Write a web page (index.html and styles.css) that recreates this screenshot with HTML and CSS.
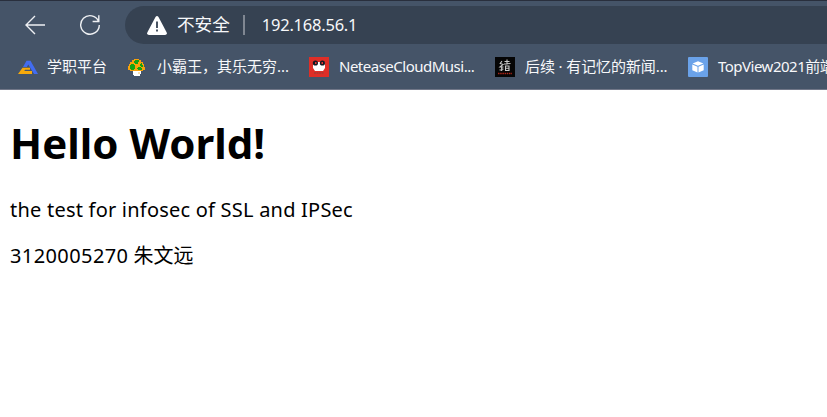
FILE: index.html
```html
<!DOCTYPE html>
<html lang="zh-CN">
<head>
<meta charset="utf-8">
<title>192.168.56.1</title>
<link rel="stylesheet" href="styles.css">
</head>
<body>
<header class="browser">
  <div class="toolbar">
    <svg class="back" width="22" height="20" viewBox="0 0 22 20"><path d="M11 1 2 10l9 9M2 10h19"/></svg>
    <svg class="reload" width="22" height="22" viewBox="0 0 22 22"><path d="M19.6 7.4A9.3 9.3 0 1 0 20.3 11M19.8 1.3v6.2h-6.2"/></svg>
    <div class="address">
      <svg class="warning" width="20" height="19" viewBox="0 0 20 19"><path d="M8.5.9Q10-.8 11.5.9L19.7 16.4Q20.4 18.7 18 19H2Q-.4 18.7.3 16.4Z" fill="#fff"/><path d="M10 5.5v6.5M10 13.5v2" stroke="#364252" stroke-width="1.8"/></svg>
      <span class="security">不安全</span>
      <span class="divider"></span>
      <span class="url">192.168.56.1</span>
    </div>
  </div>
  <nav class="bookmarks">
    <a class="bookmark b1">
      <svg width="20" height="20" viewBox="0 0 20 20"><path d="M8.5 3.7h4L20 17h-4L10.3 7.5 8.8 10H5Z" fill="#426cf0"/><path d="M4.5 10.8H12v1.9H7L6.3 14H14v3H0Z" fill="#f6a90b"/></svg>
      <span>学职平台</span>
    </a>
    <a class="bookmark b2">
      <svg width="20" height="20" viewBox="0 0 20 20"><path d="M7 2h5v1h2v2h2v2h1v3h1v3h-2v1H3v-1H1V9h1V7h1V5h2V3h2Z" fill="#f7a20a"/><path d="M8 3h4v2h-1v2H8V6H7V4h1ZM4 7h3v1h1v4H7v1H4v-1H3V8h1ZM14 6h1v2h1v2h-2V9h-1V7h1ZM11 10h3v1h1v2h-4v-1h-1v-1h1Z" fill="#12a312"/><path d="M6 14h8v3h-1v2H7v-1H6Z" fill="#fff"/><path d="M11 15h2v2h-2Z" fill="#f8dfb0"/></svg>
      <span>小霸王，其乐无穷...</span>
    </a>
    <a class="bookmark b3">
      <svg width="20" height="20" viewBox="0 0 20 20"><path fill="#df2e27" d="M0 0h20v20H0z"/><path d="M4 5h12v6l-2 3H6l-2-3Z" fill="#fff"/><circle cx="6.4" cy="6" r="2.6" fill="#171721"/><circle cx="13.4" cy="6" r="2.6" fill="#171721"/><path d="M6 5h1.5v2H6zM12.5 5H14v2h-1.5z" fill="#e53633"/><path d="M5 16h10" stroke="#a83a35" stroke-width="1.5" stroke-dasharray="2 .5"/></svg>
      <span>NeteaseCloudMusi...</span>
    </a>
    <a class="bookmark b4">
      <svg width="20" height="20" viewBox="0 0 20 20"><path fill="#050505" d="M0 0h20v20H0z"/><path d="M7 4 5.2 6.5 8 7.5 5 10h3.5M4.5 13l4-1M6.7 10v4M9.5 4.5h5M12 2.5v5M9 7l6.5-.5M10.5 9h3.5v4.5h-3.5zM10.5 11.2H14" fill="none" stroke="#c9c9c9" stroke-width="1.1"/><path d="M3 16.5h14" stroke="#ac2418" stroke-width="1.6" stroke-dasharray="1.5 .7"/></svg>
      <span>后续 · 有记忆的新闻...</span>
    </a>
    <a class="bookmark b5">
      <svg width="20" height="20" viewBox="0 0 20 20"><rect width="20" height="20" rx="1" fill="#6aa2e9"/><path d="m10 4.3 5.4 2.2L10 8.8 4.6 6.5ZM4.3 7.5l5.2 2.2v5.8l-5.2-2.3ZM15.7 7.5l-5.2 2.2v5.8l5.2-2.3Z" fill="#fff"/></svg>
      <span>TopView2021前端</span>
    </a>
  </nav>
</header>
<main class="page">
  <h1>Hello World!</h1>
  <p class="test">the test for infosec of SSL and IPSec</p>
  <p class="author"><span>3120005270</span> 朱文远</p>
</main>
</body>
</html>
```
FILE: styles.css
```css
* { box-sizing: border-box; }
body {
  margin: 0;
  overflow: hidden;
  background: #fff;
  color: #000;
  font-family: "Noto Sans", "Noto Sans CJK SC", sans-serif;
}
.browser {
  height: 90px;
  background: #455468;
  border-top: 1px solid #292f3d;
  border-bottom: 1px solid #717788;
  color: #f7f8fa;
  overflow: hidden;
}
.toolbar {
  display: flex;
  align-items: center;
  height: 43px;
  padding: 5px 0 0 24px;
}
.toolbar svg { flex: none; }
.back, .reload { fill: none; stroke: #eef0f3; stroke-width: 1.4; }
.reload { margin-left: 33px; }
.address {
  display: flex;
  align-items: center;
  flex: 1;
  height: 38px;
  margin-left: 24px;
  padding-left: 22px;
  border-radius: 19px 0 0 19px;
  background: #364252;
  white-space: nowrap;
}
.security { margin-left: 10px; font-size: 17.6px; line-height: 36px; padding-bottom: 2px; }
.divider { width: 2px; height: 20px; margin-left: 13px; background: #808792; }
.url { margin-left: 17px; font-size: 16.5px; line-height: 38px; letter-spacing: -0.23px; }
.bookmarks {
  display: flex;
  height: 46px;
  padding-left: 18px;
  white-space: nowrap;
}
.bookmark {
  display: flex;
  align-items: center;
  flex: none;
  gap: 10px;
  font-size: 15px;
  line-height: 44px;
}
.bookmark svg { flex: none; }
.bookmark span { padding-bottom: 2px; }
.b1 { width: 109px; }
.b1 span { margin-left: -1px; }
.b2 { width: 182px; }
.b3 { width: 186px; letter-spacing: -0.5px; }
.b4 { width: 193px; letter-spacing: -0.1px; }
.b5 { letter-spacing: -0.5px; }
.page { padding: 0 10px; }
h1 {
  margin: 23px 0 0;
  font-size: 42px;
  line-height: 60px;
  font-weight: 700;
}
p { margin: 0; font-size: 20px; line-height: 46px; white-space: nowrap; }
.test { margin-top: 14px; letter-spacing: 0.22px; }
.author span { letter-spacing: 0.4px; }
```
